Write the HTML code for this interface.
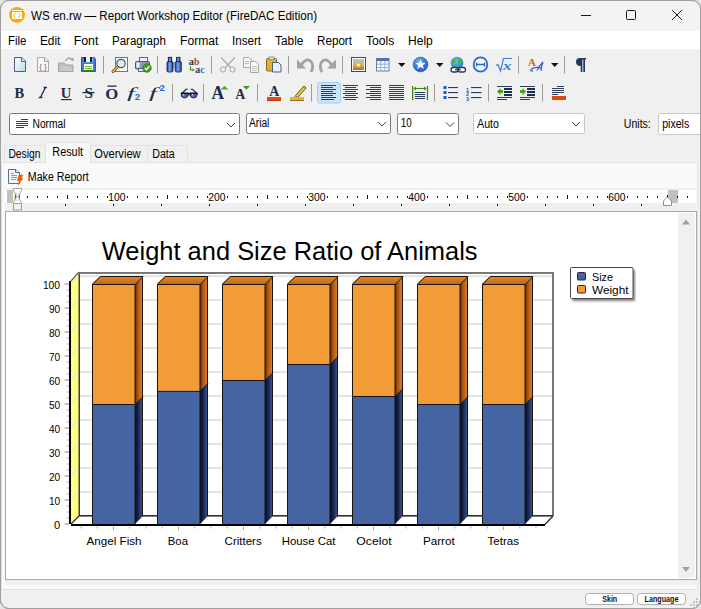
<!DOCTYPE html>
<html><head><meta charset="utf-8"><style>
html,body{margin:0;padding:0;width:701px;height:609px;overflow:hidden;background:#fff}

</style></head><body>
<svg width="701" height="609" viewBox="0 0 701 609" style="display:block">
<defs>
<linearGradient id="sideO" x1="0" x2="1" y1="0" y2="0"><stop offset="0" stop-color="#5a2a08"/><stop offset="0.35" stop-color="#b0520f"/><stop offset="1" stop-color="#e08a30"/></linearGradient>
<linearGradient id="topO" x1="0" x2="0" y1="0" y2="1"><stop offset="0" stop-color="#e08a2a"/><stop offset="1" stop-color="#c06a18"/></linearGradient>
<linearGradient id="sideB" x1="0" x2="1" y1="0" y2="0"><stop offset="0" stop-color="#060a20"/><stop offset="0.4" stop-color="#18244e"/><stop offset="1" stop-color="#3e5f9e"/></linearGradient>
<linearGradient id="pageG" x1="0" x2="1" y1="0" y2="1"><stop offset="0" stop-color="#ffffff"/><stop offset="1" stop-color="#b8dced"/></linearGradient>

</defs>
<rect x="0" y="0" width="701" height="609" fill="#e6e6e6"/>
<rect x="0.5" y="0.5" width="700" height="608" rx="8" ry="8" fill="#f0f0f0" stroke="#a0a0a0" stroke-width="1"/>
<path d="M1 9 A8 8 0 0 1 9 1 L692 1 A8 8 0 0 1 700 9 L700 31 L1 31 Z" fill="#f3f3f3"/>
<circle cx="17" cy="14.9" r="7.9" fill="#f9ab00"/>
<rect x="12" y="10" width="10" height="1" fill="#fff"/><rect x="12" y="12" width="10" height="7" fill="#fff"/>
<path d="M15.6 13.4 L13.5 15.5 L15.6 17.6 M18.4 13.4 L20.5 15.5 L18.4 17.6" stroke="#f9ab00" stroke-width="1" fill="none"/>
<text x="31.00" y="20.00" font-size="12" fill="#000" font-weight="normal" font-family="Liberation Sans" textLength="286.00" lengthAdjust="spacingAndGlyphs" >WS en.rw — Report Workshop Editor (FireDAC Edition)</text>
<path d="M581 15.5 H591" stroke="#1a1a1a" stroke-width="1"/>
<rect x="626.5" y="10.5" width="9" height="9" rx="1" fill="none" stroke="#1a1a1a" stroke-width="1"/>
<path d="M672 10 L682 20 M682 10 L672 20" stroke="#1a1a1a" stroke-width="1"/>
<rect x="1" y="31" width="699" height="18" fill="#ffffff"/>
<text x="8.00" y="45.00" font-size="12" fill="#000" font-weight="normal" font-family="Liberation Sans" textLength="18.40" lengthAdjust="spacingAndGlyphs" >File</text>
<text x="39.90" y="45.00" font-size="12" fill="#000" font-weight="normal" font-family="Liberation Sans" textLength="20.50" lengthAdjust="spacingAndGlyphs" >Edit</text>
<text x="73.70" y="45.00" font-size="12" fill="#000" font-weight="normal" font-family="Liberation Sans" textLength="24.70" lengthAdjust="spacingAndGlyphs" >Font</text>
<text x="112.00" y="45.00" font-size="12" fill="#000" font-weight="normal" font-family="Liberation Sans" textLength="53.80" lengthAdjust="spacingAndGlyphs" >Paragraph</text>
<text x="180.00" y="45.00" font-size="12" fill="#000" font-weight="normal" font-family="Liberation Sans" textLength="38.40" lengthAdjust="spacingAndGlyphs" >Format</text>
<text x="232.00" y="45.00" font-size="12" fill="#000" font-weight="normal" font-family="Liberation Sans" textLength="29.00" lengthAdjust="spacingAndGlyphs" >Insert</text>
<text x="275.00" y="45.00" font-size="12" fill="#000" font-weight="normal" font-family="Liberation Sans" textLength="28.40" lengthAdjust="spacingAndGlyphs" >Table</text>
<text x="317.00" y="45.00" font-size="12" fill="#000" font-weight="normal" font-family="Liberation Sans" textLength="35.00" lengthAdjust="spacingAndGlyphs" >Report</text>
<text x="366.00" y="45.00" font-size="12" fill="#000" font-weight="normal" font-family="Liberation Sans" textLength="28.40" lengthAdjust="spacingAndGlyphs" >Tools</text>
<text x="408.00" y="45.00" font-size="12" fill="#000" font-weight="normal" font-family="Liberation Sans" textLength="24.80" lengthAdjust="spacingAndGlyphs" >Help</text>
<path d="M14.5 57.5 H22 L25.5 61 V71.5 H14.5 Z" fill="url(#pageG)" stroke="#4c5f7e"/>
<path d="M21.5 57.5 V61.5 H25.5" fill="#d8ecf6" stroke="#4c5f7e"/>
<path d="M37.5 57.5 H45 L48.5 61 V71.5 H37.5 Z" fill="#f6f6f6" stroke="#a8a8a8"/>
<path d="M44.5 57.5 V61.5 H48.5" fill="#e8e8e8" stroke="#a8a8a8"/>
<text x="43" y="69" font-size="8" fill="#707070" font-family="Liberation Sans" font-weight="normal" font-style="normal" text-anchor="middle">{ }</text>
<path d="M58.5 63 V71.5 H73 V65 H66 L64.5 63 Z" fill="#bdbdbd" stroke="#a6a6a6"/>
<rect x="60" y="66" width="12" height="5" fill="#c8c8c8"/>
<path d="M65.5 61 Q68.5 56 72 59.5" fill="none" stroke="#9a9a9a" stroke-width="1.3"/>
<path d="M70 60 L73.8 61 L73.2 57.5 Z" fill="#9a9a9a"/>
<path d="M81 57 H94 L96 59 V72 H81 Z" fill="#3f7fd8"/>
<path d="M81.5 57.5 H93.8 L95.5 59.2 V71.5 H81.5 Z" fill="none" stroke="#2a5cb0" stroke-width="1"/>
<rect x="84" y="57" width="8.5" height="5" fill="#f4f4f4"/><rect x="84" y="57" width="2" height="5" fill="#10182a"/><rect x="90" y="57" width="2" height="5" fill="#10182a"/>
<rect x="84" y="62" width="9" height="1" fill="#5a9ae8"/>
<rect x="84" y="64" width="9" height="6" fill="#f4faff"/>
<rect x="85" y="66" width="7" height="1" fill="#78b828"/><rect x="85" y="68" width="7" height="1" fill="#78b828"/>
<rect x="84" y="70" width="9" height="2" fill="#3a7a10"/>
<rect x="103.0" y="56" width="1" height="17.5" fill="#9a9a9a"/>
<rect x="115.5" y="57.5" width="12" height="14" fill="#fafafa" stroke="#6a7890"/>
<circle cx="121" cy="63.5" r="4.2" fill="#dceaf4" stroke="#4a5a70" stroke-width="1.2"/>
<path d="M117.5 67 L113 71.5" stroke="#6a4a10" stroke-width="3" stroke-linecap="round"/>
<path d="M117.5 67 L113 71.5" stroke="#f0c040" stroke-width="1.6" stroke-linecap="round"/>
<rect x="139.5" y="57.5" width="8" height="4.5" fill="#e8f2fa" stroke="#5a6a80"/>
<rect x="135.5" y="61.5" width="14" height="7.5" rx="1" fill="#8a9ab0" stroke="#4a5a70"/>
<rect x="136.5" y="62.5" width="3" height="5" fill="#f0f4f8"/>
<rect x="138.5" y="68.5" width="8" height="3" fill="#dde8f0" stroke="#5a6a80"/>
<circle cx="147" cy="68" r="4.3" fill="#4a9a20" stroke="#2a6a10" stroke-width="0.6"/>
<path d="M144.8 68 L146.5 69.8 L149.3 66.2" fill="none" stroke="#fff" stroke-width="1.3"/>
<rect x="157.0" y="56" width="1" height="17.5" fill="#9a9a9a"/>
<defs><linearGradient id="binoG" x1="0" x2="1" y1="0" y2="0"><stop offset="0" stop-color="#1a3a90"/><stop offset="0.45" stop-color="#7aa8f0"/><stop offset="1" stop-color="#1a3a90"/></linearGradient></defs>
<rect x="167.0" y="61.5" width="6" height="10.5" rx="1.2" fill="url(#binoG)" stroke="#0c1a40" stroke-width="0.8"/>
<rect x="168.3" y="57.3" width="3.4" height="4.5" fill="url(#binoG)" stroke="#0c1a40" stroke-width="0.8"/>
<rect x="175.3" y="61.5" width="6" height="10.5" rx="1.2" fill="url(#binoG)" stroke="#0c1a40" stroke-width="0.8"/>
<rect x="176.60000000000002" y="57.3" width="3.4" height="4.5" fill="url(#binoG)" stroke="#0c1a40" stroke-width="0.8"/>
<rect x="173" y="62.5" width="2.3" height="1" fill="#3a70d8"/><rect x="173" y="64.5" width="2.3" height="1" fill="#3a70d8"/><rect x="173" y="66.5" width="2.3" height="1" fill="#3a70d8"/>
<text x="188.5" y="65" font-size="10" fill="#2e3f60" font-family="Liberation Serif" font-weight="bold" font-style="normal" text-anchor="start" textLength="5.5" lengthAdjust="spacingAndGlyphs">a</text>
<text x="194" y="65" font-size="10" fill="#b84a18" font-family="Liberation Serif" font-weight="bold" font-style="normal" text-anchor="start" textLength="5.5" lengthAdjust="spacingAndGlyphs">b</text>
<path d="M190.5 66.5 V70 H193.5" fill="none" stroke="#3a8a20" stroke-width="1.2"/><path d="M192.5 68.5 L194.5 70 L192.5 71.5 Z" fill="#3a8a20"/>
<text x="195" y="72.5" font-size="10" fill="#2e3f60" font-family="Liberation Serif" font-weight="bold" font-style="normal" text-anchor="start" textLength="5.2" lengthAdjust="spacingAndGlyphs">a</text>
<text x="200.2" y="72.5" font-size="10" fill="#3a70d0" font-family="Liberation Serif" font-weight="bold" font-style="normal" text-anchor="start" textLength="4.5" lengthAdjust="spacingAndGlyphs">c</text>
<rect x="211.0" y="56" width="1" height="17.5" fill="#9a9a9a"/>
<path d="M221 57.5 L231 68 M235 57.5 L225 68" stroke="#a8a8a8" stroke-width="1.1"/>
<circle cx="223" cy="69.5" r="2.5" fill="none" stroke="#b0b0b0" stroke-width="1.1"/><circle cx="232.5" cy="69.5" r="2.5" fill="none" stroke="#b0b0b0" stroke-width="1.1"/>
<path d="M243.5 57.5 H249 L251.5 60 V67.5 H243.5 Z" fill="#f8f8f8" stroke="#a8a8a8"/>
<path d="M250.5 61.5 H256 L258.5 64 V72.5 H250.5 Z" fill="#f8f8f8" stroke="#a8a8a8"/>
<g fill="#b0b0b0"><rect x="245" y="61" width="4" height="0.8"/><rect x="245" y="63" width="4" height="0.8"/><rect x="252" y="66" width="5" height="0.8"/><rect x="252" y="68" width="5" height="0.8"/><rect x="252" y="70" width="5" height="0.8"/></g>
<rect x="266.5" y="58.5" width="10" height="12.5" rx="1" fill="#e0b030" stroke="#8a6a20"/>
<rect x="269" y="57" width="5" height="2.5" fill="#e8eef8" stroke="#6a7a90" stroke-width="0.8"/>
<path d="M272.5 62.5 H278.5 L281 65 V72 H272.5 Z" fill="#e8f2fa" stroke="#4c5f7e"/>
<rect x="288.0" y="56" width="1" height="17.5" fill="#9a9a9a"/>
<path d="M301 65.5 Q306 57 311 61.5 Q314.5 66 311 72" fill="none" stroke="#a2a2a2" stroke-width="2.8"/>
<path d="M297 59.5 L297 68.5 L306 68.5 Z" fill="#a2a2a2"/>
<path d="M332 65.5 Q327 57 322 61.5 Q318.5 66 322 72" fill="none" stroke="#a2a2a2" stroke-width="2.8"/>
<path d="M336 59.5 L336 68.5 L327 68.5 Z" fill="#a2a2a2"/>
<rect x="342.0" y="56" width="1" height="17.5" fill="#9a9a9a"/>
<rect x="351.5" y="57.5" width="14" height="14" fill="#fff" stroke="#3a4a68"/>
<defs><linearGradient id="sky" x1="0" x2="0" y1="0" y2="1"><stop offset="0" stop-color="#9cc8f0"/><stop offset="0.55" stop-color="#f0b030"/><stop offset="0.75" stop-color="#e88a20"/><stop offset="1" stop-color="#5080c0"/></linearGradient></defs>
<rect x="353" y="59" width="11" height="11" fill="url(#sky)"/>
<circle cx="358.5" cy="65" r="1.6" fill="#fff8d0"/>
<rect x="376.5" y="58.5" width="12.5" height="12.5" fill="#f4f8fc" stroke="#6a80a0"/>
<rect x="376.5" y="58.5" width="12.5" height="2.5" fill="#4a72b8"/>
<g stroke="#8aa0c0" stroke-width="0.8"><path d="M380.8 61 V71 M384.8 61 V71 M377 64.2 H389 M377 67.5 H389"/></g>
<path d="M398 63 H405.5 L401.75 67 Z" fill="#111"/>
<defs><radialGradient id="bluec" cx="0.4" cy="0.3" r="0.8"><stop offset="0" stop-color="#6ab0f8"/><stop offset="1" stop-color="#1a50c0"/></radialGradient><radialGradient id="globeG" cx="0.4" cy="0.35" r="0.7"><stop offset="0" stop-color="#60c8f8"/><stop offset="1" stop-color="#1878c0"/></radialGradient></defs>
<circle cx="420.5" cy="64.5" r="7.3" fill="url(#bluec)" stroke="#1a3a90" stroke-width="0.6"/>
<path d="M420.5 59.2 L421.9 62.8 L425.6 62.9 L422.7 65.2 L423.7 68.9 L420.5 66.8 L417.3 68.9 L418.3 65.2 L415.4 62.9 L419.1 62.8 Z" fill="#fff"/>
<path d="M436 63 H443.5 L439.75 67 Z" fill="#111"/>
<circle cx="457" cy="63" r="6.3" fill="url(#globeG)"/>
<path d="M452 60 Q455 58 456 61 Q454 64 453 63 Z M458 58.5 Q462 59 462.5 62 Q460 65 458 62 Z M455 65 Q458 64 459 68 Q456 69 455 67 Z" fill="#5ab030"/>
<rect x="451" y="67.5" width="7" height="4.5" rx="2.2" fill="#fff" stroke="#2a3a58" stroke-width="1.3"/>
<rect x="458" y="67.5" width="7.5" height="4.5" rx="2.2" fill="#fff" stroke="#2a3a58" stroke-width="1.3"/>
<rect x="455" y="69.2" width="6" height="1.2" fill="#2a3a58"/>
<ellipse cx="480.5" cy="64.5" rx="6.8" ry="7.2" fill="#f4f8ff" stroke="#2a6ad0" stroke-width="1.8"/>
<path d="M476.5 64.5 H484.5 M476.5 62.5 V66.5 M484.5 62.5 V66.5" stroke="#2a6ad0" stroke-width="1.4"/>
<path d="M496 65.5 L498 64.5 L500.5 71 L503.5 58.5 H512" fill="none" stroke="#3a80d0" stroke-width="1.2"/>
<text x="503" y="70" font-size="11.5" fill="#3a80d0" font-family="Liberation Serif" font-weight="bold" font-style="italic" text-anchor="start" textLength="8.5" lengthAdjust="spacingAndGlyphs">x</text>
<rect x="518.0" y="56" width="1" height="17.5" fill="#9a9a9a"/>
<text x="528" y="65.5" font-size="11" fill="#d85a20" font-family="Liberation Serif" font-weight="bold" font-style="normal" text-anchor="start" textLength="8" lengthAdjust="spacingAndGlyphs">A</text>
<path d="M533 71 Q530 71.5 531 69.5 Q535 66 541 68 M537 70.5 Q539 66 543 62 Q541 67 541 71" fill="none" stroke="#3a5ad0" stroke-width="1.2"/>
<path d="M551 63 H558.5 L554.75 67 Z" fill="#111"/>
<rect x="564.0" y="56" width="1" height="17.5" fill="#9a9a9a"/>
<path d="M580 58 H586 V59.5 H585 V72 H583.3 V59.5 H582.4 V72 H580.7 V66 Q576 66 576 62 Q576 58 580 58 Z" fill="#22385a"/>
<text x="14.5" y="98" font-size="15.5" fill="#1c2c4c" font-family="Liberation Serif" font-weight="bold" font-style="normal" text-anchor="start" textLength="9.7" lengthAdjust="spacingAndGlyphs">B</text>
<path d="M43.5 87.5 H47 M38.8 97.5 H42.3 M45.3 87.5 L40.5 97.5" fill="none" stroke="#1c2c4c" stroke-width="1.3"/>
<text x="60.8" y="97.5" font-size="15" fill="#1c2c4c" font-family="Liberation Serif" font-weight="bold" font-style="normal" text-anchor="start" textLength="10.5" lengthAdjust="spacingAndGlyphs">U</text>
<rect x="61" y="99" width="10.5" height="1.2" fill="#1c2c4c"/>
<text x="84.5" y="98" font-size="15" fill="#1c2c4c" font-family="Liberation Serif" font-weight="bold" font-style="normal" text-anchor="start" textLength="8.5" lengthAdjust="spacingAndGlyphs">S</text>
<rect x="82.5" y="92" width="12" height="1.2" fill="#1c2c4c"/>
<text x="105.3" y="98.6" font-size="15" fill="#1c2c4c" font-family="Liberation Serif" font-weight="bold" font-style="normal" text-anchor="start" textLength="13" lengthAdjust="spacingAndGlyphs">O</text>
<rect x="107.5" y="85.5" width="9" height="1.3" fill="#1c2c4c"/>
<text x="127" y="98" font-size="15" fill="#1c2c4c" font-family="Liberation Serif" font-weight="normal" font-style="italic" text-anchor="start" textLength="8" lengthAdjust="spacingAndGlyphs">f</text>
<text x="134.8" y="100" font-size="9" fill="#1a6ad8" font-family="Liberation Sans" font-weight="bold" font-style="normal" text-anchor="start" textLength="5.4" lengthAdjust="spacingAndGlyphs">2</text>
<text x="149" y="98" font-size="15" fill="#1c2c4c" font-family="Liberation Serif" font-weight="normal" font-style="italic" text-anchor="start" textLength="8" lengthAdjust="spacingAndGlyphs">f</text>
<text x="159.6" y="91.3" font-size="9" fill="#1a6ad8" font-family="Liberation Sans" font-weight="bold" font-style="normal" text-anchor="start" textLength="5.4" lengthAdjust="spacingAndGlyphs">2</text>
<rect x="172.0" y="84" width="1" height="17.5" fill="#9a9a9a"/>
<path d="M181.8 93.5 L186 89.3 H187.8 M196.8 93.5 L192.5 89.3 H190.7" fill="none" stroke="#1a2438" stroke-width="1.1"/>
<path d="M181 93 H188.3 V94 Q188.3 98 184.6 98 Q181 98 181 94 Z" fill="#4a68a8" stroke="#101a30" stroke-width="0.8"/>
<path d="M190 93 H197.3 V94 Q197.3 98 193.6 98 Q190 98 190 94 Z" fill="#4a68a8" stroke="#101a30" stroke-width="0.8"/>
<rect x="181" y="92.8" width="16.5" height="1.3" fill="#0a0f1c"/>
<rect x="188" y="94.3" width="2.2" height="1" fill="#0a0f1c"/>
<circle cx="183.5" cy="94.8" r="0.8" fill="#dde8ff"/><circle cx="192.5" cy="94.8" r="0.8" fill="#dde8ff"/>
<rect x="203.0" y="84" width="1" height="17.5" fill="#9a9a9a"/>
<text x="211.6" y="98.6" font-size="18.5" fill="#1c2c4c" font-family="Liberation Serif" font-weight="bold" font-style="normal" text-anchor="start" textLength="12.6" lengthAdjust="spacingAndGlyphs">A</text>
<path d="M220.5 89.5 L224.5 85.8 L228.5 89.5 Z" fill="#58a828"/>
<text x="235.3" y="98.6" font-size="15.5" fill="#1c2c4c" font-family="Liberation Serif" font-weight="bold" font-style="normal" text-anchor="start" textLength="10" lengthAdjust="spacingAndGlyphs">A</text>
<path d="M242.8 86 H250 L246.4 89.8 Z" fill="#4a9a20"/>
<rect x="257.0" y="84" width="1" height="17.5" fill="#9a9a9a"/>
<text x="269.3" y="95.5" font-size="15" fill="#1c2c4c" font-family="Liberation Serif" font-weight="bold" font-style="normal" text-anchor="start" textLength="10" lengthAdjust="spacingAndGlyphs">A</text>
<rect x="267" y="97" width="14" height="4" fill="#e84a0c"/><rect x="267" y="100" width="14" height="1" fill="#b83a08"/>
<path d="M295.5 95.5 L304 86 L306 88 L297.5 97.5 Z" fill="#f8d020" stroke="#403818" stroke-width="0.9"/>
<path d="M295.5 95.5 L293 97.5 L297.5 97.5 Z" fill="#c89020"/>
<rect x="290" y="97" width="14" height="4" fill="#e0b040"/><rect x="290" y="100" width="14" height="1" fill="#9a7020"/>
<rect x="311.0" y="84" width="1" height="17.5" fill="#9a9a9a"/>
<rect x="317.5" y="82.5" width="23" height="20.5" rx="2" fill="#cce4f7" stroke="#99d1ff"/>
<rect x="321" y="85" width="15" height="1" fill="#2a3e5c"/>
<rect x="321" y="87" width="12" height="1" fill="#2a3e5c"/>
<rect x="321" y="89" width="15" height="1" fill="#2a3e5c"/>
<rect x="321" y="91" width="12" height="1" fill="#2a3e5c"/>
<rect x="321" y="93" width="15" height="1" fill="#2a3e5c"/>
<rect x="321" y="95" width="12" height="1" fill="#2a3e5c"/>
<rect x="321" y="97" width="15" height="1" fill="#2a3e5c"/>
<rect x="321" y="99" width="13" height="1" fill="#2a3e5c"/>
<rect x="343" y="85" width="15" height="1" fill="#2a3e5c"/>
<rect x="345" y="87" width="11" height="1" fill="#2a3e5c"/>
<rect x="343" y="89" width="15" height="1" fill="#2a3e5c"/>
<rect x="345" y="91" width="11" height="1" fill="#2a3e5c"/>
<rect x="343" y="93" width="15" height="1" fill="#2a3e5c"/>
<rect x="345" y="95" width="11" height="1" fill="#2a3e5c"/>
<rect x="343" y="97" width="15" height="1" fill="#2a3e5c"/>
<rect x="345" y="99" width="11" height="1" fill="#2a3e5c"/>
<rect x="366" y="85" width="15" height="1" fill="#2a3e5c"/>
<rect x="370" y="87" width="11" height="1" fill="#2a3e5c"/>
<rect x="366" y="89" width="15" height="1" fill="#2a3e5c"/>
<rect x="370" y="91" width="11" height="1" fill="#2a3e5c"/>
<rect x="366" y="93" width="15" height="1" fill="#2a3e5c"/>
<rect x="370" y="95" width="11" height="1" fill="#2a3e5c"/>
<rect x="366" y="97" width="15" height="1" fill="#2a3e5c"/>
<rect x="370" y="99" width="11" height="1" fill="#2a3e5c"/>
<rect x="389" y="85" width="15" height="1" fill="#2a3e5c"/>
<rect x="389" y="87" width="15" height="1" fill="#2a3e5c"/>
<rect x="389" y="89" width="15" height="1" fill="#2a3e5c"/>
<rect x="389" y="91" width="15" height="1" fill="#2a3e5c"/>
<rect x="389" y="93" width="15" height="1" fill="#2a3e5c"/>
<rect x="389" y="95" width="15" height="1" fill="#2a3e5c"/>
<rect x="389" y="97" width="15" height="1" fill="#2a3e5c"/>
<rect x="389" y="99" width="15" height="1" fill="#2a3e5c"/>
<rect x="412" y="86" width="1.3" height="14" fill="#3a8a10"/><rect x="426.8" y="86" width="1.3" height="14" fill="#3a8a10"/>
<path d="M414 88.5 H426" stroke="#3a8a10" stroke-width="1.1"/><path d="M413.5 88.5 L416 86.5 V90.5 Z M426.5 88.5 L424 86.5 V90.5 Z" fill="#3a8a10"/>
<rect x="415" y="92" width="10" height="1" fill="#2a3e5c"/>
<rect x="415" y="94" width="10" height="1" fill="#2a3e5c"/>
<rect x="415" y="96" width="10" height="1" fill="#2a3e5c"/>
<rect x="415" y="98" width="10" height="1" fill="#2a3e5c"/>
<rect x="434.0" y="84" width="1" height="17.5" fill="#9a9a9a"/>
<rect x="443.5" y="86" width="3" height="3" fill="#1a5ad0"/>
<rect x="448" y="87" width="10" height="1.1" fill="#2a3e5c"/>
<rect x="443.5" y="91" width="3" height="3" fill="#1a5ad0"/>
<rect x="448" y="92" width="10" height="1.1" fill="#2a3e5c"/>
<rect x="443.5" y="96" width="3" height="3" fill="#1a5ad0"/>
<rect x="448" y="97" width="10" height="1.1" fill="#2a3e5c"/>
<text x="466" y="91.5" font-size="5.5" fill="#1a5ad0" font-family="Liberation Sans" font-weight="bold" font-style="normal" text-anchor="start" textLength="3" lengthAdjust="spacingAndGlyphs">1</text>
<rect x="471" y="87" width="10.5" height="1.1" fill="#2a3e5c"/>
<text x="466" y="96.1" font-size="5.5" fill="#1a5ad0" font-family="Liberation Sans" font-weight="bold" font-style="normal" text-anchor="start" textLength="3" lengthAdjust="spacingAndGlyphs">2</text>
<rect x="471" y="92" width="10.5" height="1.1" fill="#2a3e5c"/>
<text x="466" y="100.7" font-size="5.5" fill="#1a5ad0" font-family="Liberation Sans" font-weight="bold" font-style="normal" text-anchor="start" textLength="3" lengthAdjust="spacingAndGlyphs">3</text>
<rect x="471" y="97" width="10.5" height="1.1" fill="#2a3e5c"/>
<rect x="488.0" y="84" width="1" height="17.5" fill="#9a9a9a"/>
<rect x="497" y="86" width="15" height="1" fill="#2a3e5c"/>
<rect x="504" y="88" width="8" height="2" fill="#1e2e4c"/>
<rect x="504" y="91" width="8" height="2" fill="#1e2e4c"/>
<rect x="504" y="94" width="8" height="2" fill="#1e2e4c"/>
<rect x="497" y="97" width="15" height="1" fill="#2a3e5c"/>
<rect x="497" y="99" width="10" height="1" fill="#2a3e5c"/>
<path d="M497 91.5 L500.5 88 V90 H503 V93 H500.5 V95 Z" fill="#4aa020"/>
<rect x="520" y="86" width="15" height="1" fill="#2a3e5c"/>
<rect x="527" y="88" width="8" height="2" fill="#1e2e4c"/>
<rect x="527" y="91" width="8" height="2" fill="#1e2e4c"/>
<rect x="527" y="94" width="8" height="2" fill="#1e2e4c"/>
<rect x="520" y="97" width="15" height="1" fill="#2a3e5c"/>
<rect x="520" y="99" width="10" height="1" fill="#2a3e5c"/>
<path d="M526 91.5 L522.5 88 V90 H520 V93 H522.5 V95 Z" fill="#4aa020"/>
<rect x="542.0" y="84" width="1" height="17.5" fill="#9a9a9a"/>
<rect x="557" y="86" width="7" height="1" fill="#2a3e5c"/><rect x="552" y="88" width="12" height="1" fill="#2a3e5c"/><rect x="552" y="90" width="12" height="1" fill="#2a3e5c"/><rect x="552" y="92" width="12" height="1" fill="#2a3e5c"/><rect x="552" y="94" width="6" height="1" fill="#2a3e5c"/>
<rect x="552" y="96" width="14" height="4" fill="#e04810"/>
<rect x="9.5" y="113.5" width="230" height="21" rx="2" fill="#fff" stroke="#7a7a7a" stroke-width="1"/>
<g fill="#2c4060"><rect x="21" y="119" width="7" height="1"/><rect x="16" y="121" width="12" height="1"/><rect x="16" y="123" width="12" height="1"/><rect x="16" y="125" width="12" height="1"/><rect x="16" y="127" width="8" height="1"/></g>
<text x="32.50" y="128.00" font-size="12" fill="#000" font-weight="normal" font-family="Liberation Sans" textLength="33.00" lengthAdjust="spacingAndGlyphs" >Normal</text>
<path d="M227 123 L231.0 127 L235 123" fill="none" stroke="#444" stroke-width="1"/>
<rect x="246.5" y="113.5" width="144" height="20" rx="2" fill="#fff" stroke="#7a7a7a" stroke-width="1"/>
<text x="249.00" y="127.00" font-size="12" fill="#000" font-weight="normal" font-family="Liberation Sans" textLength="20.30" lengthAdjust="spacingAndGlyphs" >Arial</text>
<path d="M378 122 L382.0 126 L386 122" fill="none" stroke="#444" stroke-width="1"/>
<rect x="397.5" y="113.5" width="61" height="21" rx="2" fill="#fff" stroke="#7a7a7a" stroke-width="1"/>
<text x="400.70" y="127.00" font-size="12" fill="#000" font-weight="normal" font-family="Liberation Sans" textLength="11.00" lengthAdjust="spacingAndGlyphs" >10</text>
<path d="M446 122.5 L450.0 126.5 L454 122.5" fill="none" stroke="#444" stroke-width="1"/>
<rect x="473.5" y="113.5" width="111" height="20" rx="2" fill="#fff" stroke="#c8c8c8" stroke-width="1"/>
<text x="477.00" y="128.00" font-size="12" fill="#000" font-weight="normal" font-family="Liberation Sans" textLength="22.00" lengthAdjust="spacingAndGlyphs" >Auto</text>
<path d="M572 122 L576.0 126 L580 122" fill="none" stroke="#444" stroke-width="1"/>
<text x="623.80" y="128.00" font-size="12" fill="#000" font-weight="normal" font-family="Liberation Sans" textLength="27.00" lengthAdjust="spacingAndGlyphs" >Units:</text>
<rect x="658.5" y="113.5" width="53" height="21" rx="2" fill="#fff" stroke="#c8c8c8" stroke-width="1"/>
<text x="662.20" y="128.00" font-size="12" fill="#000" font-weight="normal" font-family="Liberation Sans" textLength="27.00" lengthAdjust="spacingAndGlyphs" >pixels</text>
<rect x="1.5" y="162.5" width="696" height="427" fill="#f9f9f9" stroke="#e2e2e2"/>
<rect x="4.5" y="145.5" width="42" height="17" fill="#f0f0f0" stroke="#e2e2e2"/>
<rect x="90.5" y="145.5" width="57" height="17" fill="#f0f0f0" stroke="#e2e2e2"/>
<rect x="147.5" y="145.5" width="40" height="17" fill="#f0f0f0" stroke="#e2e2e2"/>
<rect x="45.5" y="142.5" width="45" height="21" fill="#f9f9f9" stroke="#e2e2e2"/>
<rect x="46" y="162" width="44" height="2" fill="#f9f9f9"/>
<text x="8.40" y="158.00" font-size="12" fill="#000" font-weight="normal" font-family="Liberation Sans" textLength="32.00" lengthAdjust="spacingAndGlyphs" >Design</text>
<text x="52.30" y="155.70" font-size="12" fill="#000" font-weight="normal" font-family="Liberation Sans" textLength="30.80" lengthAdjust="spacingAndGlyphs" >Result</text>
<text x="94.30" y="158.00" font-size="12" fill="#000" font-weight="normal" font-family="Liberation Sans" textLength="46.30" lengthAdjust="spacingAndGlyphs" >Overview</text>
<text x="152.20" y="158.00" font-size="12" fill="#000" font-weight="normal" font-family="Liberation Sans" textLength="22.60" lengthAdjust="spacingAndGlyphs" >Data</text>
<path d="M8.5 169.5 H16 L19.5 173 V183.5 H8.5 Z" fill="#f2f7fb" stroke="#5a6e8a"/>
<path d="M15.5 169.5 V172.5 H19.5" fill="#dde8f4" stroke="#5a6e8a"/>
<g fill="#8a9cb8"><rect x="11" y="173" width="3" height="1"/><rect x="11" y="175" width="6" height="1"/><rect x="11" y="177" width="6" height="1"/><rect x="11" y="179" width="5" height="1"/></g>
<path d="M19 175 L23 175 L21 178.3 L23 178.3 L18 185 L19.3 180.5 L17.2 180.5 Z" fill="#f0600c" stroke="#c84800" stroke-width="0.4"/>
<text x="27.80" y="180.70" font-size="12" fill="#000" font-weight="normal" font-family="Liberation Sans" textLength="61.00" lengthAdjust="spacingAndGlyphs" >Make Report</text>
<rect x="5" y="188" width="691" height="397" fill="#f0f0f0"/>
<rect x="5" y="190" width="691" height="13" fill="#ffffff"/>
<rect x="7" y="190" width="6" height="13" fill="#c0c0c0"/>
<rect x="668" y="190" width="10" height="13" fill="#c0c0c0"/>
<rect x="27" y="196" width="1" height="2" fill="#111"/><rect x="37" y="196" width="1" height="2" fill="#111"/><rect x="47" y="196" width="1" height="2" fill="#111"/><rect x="57" y="196" width="1" height="2" fill="#111"/><rect x="67" y="195" width="1" height="4" fill="#111"/><rect x="77" y="196" width="1" height="2" fill="#111"/><rect x="87" y="196" width="1" height="2" fill="#111"/><rect x="97" y="196" width="1" height="2" fill="#111"/><rect x="107" y="196" width="1" height="2" fill="#111"/><rect x="127" y="196" width="1" height="2" fill="#111"/><rect x="137" y="196" width="1" height="2" fill="#111"/><rect x="147" y="196" width="1" height="2" fill="#111"/><rect x="157" y="196" width="1" height="2" fill="#111"/><rect x="167" y="195" width="1" height="4" fill="#111"/><rect x="177" y="196" width="1" height="2" fill="#111"/><rect x="187" y="196" width="1" height="2" fill="#111"/><rect x="197" y="196" width="1" height="2" fill="#111"/><rect x="207" y="196" width="1" height="2" fill="#111"/><rect x="227" y="196" width="1" height="2" fill="#111"/><rect x="237" y="196" width="1" height="2" fill="#111"/><rect x="247" y="196" width="1" height="2" fill="#111"/><rect x="257" y="196" width="1" height="2" fill="#111"/><rect x="267" y="195" width="1" height="4" fill="#111"/><rect x="277" y="196" width="1" height="2" fill="#111"/><rect x="287" y="196" width="1" height="2" fill="#111"/><rect x="297" y="196" width="1" height="2" fill="#111"/><rect x="307" y="196" width="1" height="2" fill="#111"/><rect x="327" y="196" width="1" height="2" fill="#111"/><rect x="337" y="196" width="1" height="2" fill="#111"/><rect x="347" y="196" width="1" height="2" fill="#111"/><rect x="357" y="196" width="1" height="2" fill="#111"/><rect x="367" y="195" width="1" height="4" fill="#111"/><rect x="377" y="196" width="1" height="2" fill="#111"/><rect x="387" y="196" width="1" height="2" fill="#111"/><rect x="397" y="196" width="1" height="2" fill="#111"/><rect x="407" y="196" width="1" height="2" fill="#111"/><rect x="427" y="196" width="1" height="2" fill="#111"/><rect x="437" y="196" width="1" height="2" fill="#111"/><rect x="447" y="196" width="1" height="2" fill="#111"/><rect x="457" y="196" width="1" height="2" fill="#111"/><rect x="467" y="195" width="1" height="4" fill="#111"/><rect x="477" y="196" width="1" height="2" fill="#111"/><rect x="487" y="196" width="1" height="2" fill="#111"/><rect x="497" y="196" width="1" height="2" fill="#111"/><rect x="507" y="196" width="1" height="2" fill="#111"/><rect x="527" y="196" width="1" height="2" fill="#111"/><rect x="537" y="196" width="1" height="2" fill="#111"/><rect x="547" y="196" width="1" height="2" fill="#111"/><rect x="557" y="196" width="1" height="2" fill="#111"/><rect x="567" y="195" width="1" height="4" fill="#111"/><rect x="577" y="196" width="1" height="2" fill="#111"/><rect x="587" y="196" width="1" height="2" fill="#111"/><rect x="597" y="196" width="1" height="2" fill="#111"/><rect x="607" y="196" width="1" height="2" fill="#111"/><rect x="627" y="196" width="1" height="2" fill="#111"/><rect x="637" y="196" width="1" height="2" fill="#111"/><rect x="647" y="196" width="1" height="2" fill="#111"/><rect x="657" y="196" width="1" height="2" fill="#111"/><rect x="667" y="195" width="1" height="4" fill="#111"/><rect x="677" y="196" width="1" height="2" fill="#111"/><rect x="687" y="196" width="1" height="2" fill="#111"/><rect x="65" y="204" width="1" height="2" fill="#111"/><rect x="113" y="204" width="1" height="2" fill="#111"/><rect x="161" y="204" width="1" height="2" fill="#111"/><rect x="209" y="204" width="1" height="2" fill="#111"/><rect x="257" y="204" width="1" height="2" fill="#111"/><rect x="305" y="204" width="1" height="2" fill="#111"/><rect x="353" y="204" width="1" height="2" fill="#111"/><rect x="401" y="204" width="1" height="2" fill="#111"/><rect x="449" y="204" width="1" height="2" fill="#111"/><rect x="497" y="204" width="1" height="2" fill="#111"/><rect x="545" y="204" width="1" height="2" fill="#111"/><rect x="593" y="204" width="1" height="2" fill="#111"/><rect x="641" y="204" width="1" height="2" fill="#111"/>
<text x="108.20" y="201.00" font-size="11.5" fill="#000" font-weight="normal" font-family="Liberation Sans" textLength="17.20" lengthAdjust="spacingAndGlyphs" >100</text>
<text x="208.20" y="201.00" font-size="11.5" fill="#000" font-weight="normal" font-family="Liberation Sans" textLength="17.20" lengthAdjust="spacingAndGlyphs" >200</text>
<text x="308.20" y="201.00" font-size="11.5" fill="#000" font-weight="normal" font-family="Liberation Sans" textLength="17.20" lengthAdjust="spacingAndGlyphs" >300</text>
<text x="408.20" y="201.00" font-size="11.5" fill="#000" font-weight="normal" font-family="Liberation Sans" textLength="17.20" lengthAdjust="spacingAndGlyphs" >400</text>
<text x="508.20" y="201.00" font-size="11.5" fill="#000" font-weight="normal" font-family="Liberation Sans" textLength="17.20" lengthAdjust="spacingAndGlyphs" >500</text>
<text x="608.20" y="201.00" font-size="11.5" fill="#000" font-weight="normal" font-family="Liberation Sans" textLength="17.20" lengthAdjust="spacingAndGlyphs" >600</text>
<text x="14.40" y="201.00" font-size="11.5" fill="#000" font-weight="normal" font-family="Liberation Sans" textLength="5.50" lengthAdjust="spacingAndGlyphs" >0</text>
<path d="M13.5 188.5 H21.5 V190.5 L18.2 196.5 L21.5 202.5 V203.5 H13.5 V202.5 L16.8 196.5 L13.5 190.5 Z" fill="#fff" fill-opacity="0.85" stroke="#a0a0a0"/>
<rect x="13.5" y="203.5" width="8" height="6.5" fill="#f0f0f0" stroke="#a0a0a0"/>
<path d="M663.5 205.5 V201 L667.5 197 L671.5 201 V205.5 Z" fill="#fff" stroke="#909090"/>
<rect x="5.5" y="211.5" width="691" height="368" fill="#ffffff" stroke="#a8a8b0"/>
<rect x="678" y="213" width="17" height="365" fill="#f0f0f0"/>
<path d="M682 224.5 L686 219.5 L690 224.5 Z" fill="#a0a0a0"/>
<path d="M682 567 L686 572 L690 567 Z" fill="#a0a0a0"/>
<g>
<rect x="79" y="273" width="474" height="243" fill="#fff"/>
<rect x="79" y="491.5" width="474" height="1.2" fill="#d4d4d4"/>
<rect x="79" y="467.5" width="474" height="1.2" fill="#d4d4d4"/>
<rect x="79" y="443.5" width="474" height="1.2" fill="#d4d4d4"/>
<rect x="79" y="419.5" width="474" height="1.2" fill="#d4d4d4"/>
<rect x="79" y="395.5" width="474" height="1.2" fill="#d4d4d4"/>
<rect x="79" y="371.5" width="474" height="1.2" fill="#d4d4d4"/>
<rect x="79" y="347.5" width="474" height="1.2" fill="#d4d4d4"/>
<rect x="79" y="323.5" width="474" height="1.2" fill="#d4d4d4"/>
<rect x="79" y="299.5" width="474" height="1.2" fill="#d4d4d4"/>
<rect x="79" y="275.5" width="474" height="1.2" fill="#d4d4d4"/>
<path d="M71 281.0 L79 273 L79 516 L71 524 Z" fill="#ffff80"/>
<path d="M71 500.0 L79 492.0" stroke="#e4e4c0" stroke-width="1"/>
<path d="M71 476.0 L79 468.0" stroke="#e4e4c0" stroke-width="1"/>
<path d="M71 452.0 L79 444.0" stroke="#e4e4c0" stroke-width="1"/>
<path d="M71 428.0 L79 420.0" stroke="#e4e4c0" stroke-width="1"/>
<path d="M71 404.0 L79 396.0" stroke="#e4e4c0" stroke-width="1"/>
<path d="M71 380.0 L79 372.0" stroke="#e4e4c0" stroke-width="1"/>
<path d="M71 356.0 L79 348.0" stroke="#e4e4c0" stroke-width="1"/>
<path d="M71 332.0 L79 324.0" stroke="#e4e4c0" stroke-width="1"/>
<path d="M71 308.0 L79 300.0" stroke="#e4e4c0" stroke-width="1"/>
<path d="M71 284.0 L79 276.0" stroke="#e4e4c0" stroke-width="1"/>
<path d="M71 524 L79 516 L553 516 L545 524 Z" fill="#fff"/>
<rect x="78.5" y="273" width="1.5" height="243" fill="#404040"/>
<rect x="79" y="272" width="475" height="2" fill="#787878"/>
<rect x="552" y="272" width="2" height="244" fill="#787878"/>
<path d="M71 281.0 L79 272" stroke="#606060" stroke-width="1.2"/>
<rect x="79" y="515" width="474" height="1.6" fill="#303030"/>
<path d="M71 524 L79 516" stroke="#303030" stroke-width="1.2"/>
<path d="M545 524.5 L553 516" stroke="#303030" stroke-width="1.4"/>
<rect x="64.5" y="523.4" width="4.5" height="1.2" fill="#a0a0a0"/>
<rect x="66.5" y="517.5" width="2.5" height="1" fill="#b8b8b8"/>
<rect x="66.5" y="511.5" width="2.5" height="1" fill="#b8b8b8"/>
<rect x="66.5" y="505.5" width="2.5" height="1" fill="#b8b8b8"/>
<rect x="64.5" y="499.4" width="4.5" height="1.2" fill="#a0a0a0"/>
<rect x="66.5" y="493.5" width="2.5" height="1" fill="#b8b8b8"/>
<rect x="66.5" y="487.5" width="2.5" height="1" fill="#b8b8b8"/>
<rect x="66.5" y="481.5" width="2.5" height="1" fill="#b8b8b8"/>
<rect x="64.5" y="475.4" width="4.5" height="1.2" fill="#a0a0a0"/>
<rect x="66.5" y="469.5" width="2.5" height="1" fill="#b8b8b8"/>
<rect x="66.5" y="463.5" width="2.5" height="1" fill="#b8b8b8"/>
<rect x="66.5" y="457.5" width="2.5" height="1" fill="#b8b8b8"/>
<rect x="64.5" y="451.4" width="4.5" height="1.2" fill="#a0a0a0"/>
<rect x="66.5" y="445.5" width="2.5" height="1" fill="#b8b8b8"/>
<rect x="66.5" y="439.5" width="2.5" height="1" fill="#b8b8b8"/>
<rect x="66.5" y="433.5" width="2.5" height="1" fill="#b8b8b8"/>
<rect x="64.5" y="427.4" width="4.5" height="1.2" fill="#a0a0a0"/>
<rect x="66.5" y="421.5" width="2.5" height="1" fill="#b8b8b8"/>
<rect x="66.5" y="415.5" width="2.5" height="1" fill="#b8b8b8"/>
<rect x="66.5" y="409.5" width="2.5" height="1" fill="#b8b8b8"/>
<rect x="64.5" y="403.4" width="4.5" height="1.2" fill="#a0a0a0"/>
<rect x="66.5" y="397.5" width="2.5" height="1" fill="#b8b8b8"/>
<rect x="66.5" y="391.5" width="2.5" height="1" fill="#b8b8b8"/>
<rect x="66.5" y="385.5" width="2.5" height="1" fill="#b8b8b8"/>
<rect x="64.5" y="379.4" width="4.5" height="1.2" fill="#a0a0a0"/>
<rect x="66.5" y="373.5" width="2.5" height="1" fill="#b8b8b8"/>
<rect x="66.5" y="367.5" width="2.5" height="1" fill="#b8b8b8"/>
<rect x="66.5" y="361.5" width="2.5" height="1" fill="#b8b8b8"/>
<rect x="64.5" y="355.4" width="4.5" height="1.2" fill="#a0a0a0"/>
<rect x="66.5" y="349.5" width="2.5" height="1" fill="#b8b8b8"/>
<rect x="66.5" y="343.5" width="2.5" height="1" fill="#b8b8b8"/>
<rect x="66.5" y="337.5" width="2.5" height="1" fill="#b8b8b8"/>
<rect x="64.5" y="331.4" width="4.5" height="1.2" fill="#a0a0a0"/>
<rect x="66.5" y="325.5" width="2.5" height="1" fill="#b8b8b8"/>
<rect x="66.5" y="319.5" width="2.5" height="1" fill="#b8b8b8"/>
<rect x="66.5" y="313.5" width="2.5" height="1" fill="#b8b8b8"/>
<rect x="64.5" y="307.4" width="4.5" height="1.2" fill="#a0a0a0"/>
<rect x="66.5" y="301.5" width="2.5" height="1" fill="#b8b8b8"/>
<rect x="66.5" y="295.5" width="2.5" height="1" fill="#b8b8b8"/>
<rect x="66.5" y="289.5" width="2.5" height="1" fill="#b8b8b8"/>
<rect x="64.5" y="283.4" width="4.5" height="1.2" fill="#a0a0a0"/>
<rect x="69" y="281.0" width="2" height="243.0" fill="#000"/>
<rect x="71" y="524" width="474" height="2" fill="#000"/>
<rect x="80.50" y="526.5" width="1" height="2" fill="#a8a8a8"/>
<rect x="96.75" y="526.5" width="1" height="2" fill="#a8a8a8"/>
<rect x="113.00" y="526.5" width="1" height="3.5" fill="#a8a8a8"/>
<rect x="129.25" y="526.5" width="1" height="2" fill="#a8a8a8"/>
<rect x="145.50" y="526.5" width="1" height="2" fill="#a8a8a8"/>
<rect x="161.75" y="526.5" width="1" height="2" fill="#a8a8a8"/>
<rect x="178.00" y="526.5" width="1" height="3.5" fill="#a8a8a8"/>
<rect x="194.25" y="526.5" width="1" height="2" fill="#a8a8a8"/>
<rect x="210.50" y="526.5" width="1" height="2" fill="#a8a8a8"/>
<rect x="226.75" y="526.5" width="1" height="2" fill="#a8a8a8"/>
<rect x="243.00" y="526.5" width="1" height="3.5" fill="#a8a8a8"/>
<rect x="259.25" y="526.5" width="1" height="2" fill="#a8a8a8"/>
<rect x="275.50" y="526.5" width="1" height="2" fill="#a8a8a8"/>
<rect x="291.75" y="526.5" width="1" height="2" fill="#a8a8a8"/>
<rect x="308.00" y="526.5" width="1" height="3.5" fill="#a8a8a8"/>
<rect x="324.25" y="526.5" width="1" height="2" fill="#a8a8a8"/>
<rect x="340.50" y="526.5" width="1" height="2" fill="#a8a8a8"/>
<rect x="356.75" y="526.5" width="1" height="2" fill="#a8a8a8"/>
<rect x="373.00" y="526.5" width="1" height="3.5" fill="#a8a8a8"/>
<rect x="389.25" y="526.5" width="1" height="2" fill="#a8a8a8"/>
<rect x="405.50" y="526.5" width="1" height="2" fill="#a8a8a8"/>
<rect x="421.75" y="526.5" width="1" height="2" fill="#a8a8a8"/>
<rect x="438.00" y="526.5" width="1" height="3.5" fill="#a8a8a8"/>
<rect x="454.25" y="526.5" width="1" height="2" fill="#a8a8a8"/>
<rect x="470.50" y="526.5" width="1" height="2" fill="#a8a8a8"/>
<rect x="486.75" y="526.5" width="1" height="2" fill="#a8a8a8"/>
<rect x="503.00" y="526.5" width="1" height="3.5" fill="#a8a8a8"/>
<rect x="519.25" y="526.5" width="1" height="2" fill="#a8a8a8"/>
<rect x="535.50" y="526.5" width="1" height="2" fill="#a8a8a8"/>
<rect x="92" y="404.0" width="43" height="120.0" fill="#4464a2"/>
<rect x="92" y="284.0" width="43" height="120.0" fill="#f29c38"/>
<path d="M135 404.0 L143 396.0 L143 516 L135 524 Z" fill="url(#sideB)"/>
<path d="M135 284.0 L143 276.0 L143 396.0 L135 404.0 Z" fill="url(#sideO)"/>
<path d="M92 284.0 L100 276.0 L143 276.0 L135 284.0 Z" fill="url(#topO)"/>
<path d="M92.5 524 V284.5 H135 V524 M92 404.5 H135 L143 396.5 M92.5 284.0 L100.5 276.5 H142.5 V516 M135 284.5 L143 276.5" fill="none" stroke="#1c140c" stroke-width="1"/>
<rect x="157" y="390.8" width="43" height="133.2" fill="#4464a2"/>
<rect x="157" y="284.0" width="43" height="106.80000000000001" fill="#f29c38"/>
<path d="M200 390.8 L208 382.8 L208 516 L200 524 Z" fill="url(#sideB)"/>
<path d="M200 284.0 L208 276.0 L208 382.8 L200 390.8 Z" fill="url(#sideO)"/>
<path d="M157 284.0 L165 276.0 L208 276.0 L200 284.0 Z" fill="url(#topO)"/>
<path d="M157.5 524 V284.5 H200 V524 M157 391.3 H200 L208 383.3 M157.5 284.0 L165.5 276.5 H207.5 V516 M200 284.5 L208 276.5" fill="none" stroke="#1c140c" stroke-width="1"/>
<rect x="222" y="380.0" width="43" height="144.0" fill="#4464a2"/>
<rect x="222" y="284.0" width="43" height="96.0" fill="#f29c38"/>
<path d="M265 380.0 L273 372.0 L273 516 L265 524 Z" fill="url(#sideB)"/>
<path d="M265 284.0 L273 276.0 L273 372.0 L265 380.0 Z" fill="url(#sideO)"/>
<path d="M222 284.0 L230 276.0 L273 276.0 L265 284.0 Z" fill="url(#topO)"/>
<path d="M222.5 524 V284.5 H265 V524 M222 380.5 H265 L273 372.5 M222.5 284.0 L230.5 276.5 H272.5 V516 M265 284.5 L273 276.5" fill="none" stroke="#1c140c" stroke-width="1"/>
<rect x="287" y="364.0" width="43" height="160.0" fill="#4464a2"/>
<rect x="287" y="284.0" width="43" height="80.0" fill="#f29c38"/>
<path d="M330 364.0 L338 356.0 L338 516 L330 524 Z" fill="url(#sideB)"/>
<path d="M330 284.0 L338 276.0 L338 356.0 L330 364.0 Z" fill="url(#sideO)"/>
<path d="M287 284.0 L295 276.0 L338 276.0 L330 284.0 Z" fill="url(#topO)"/>
<path d="M287.5 524 V284.5 H330 V524 M287 364.5 H330 L338 356.5 M287.5 284.0 L295.5 276.5 H337.5 V516 M330 284.5 L338 276.5" fill="none" stroke="#1c140c" stroke-width="1"/>
<rect x="352" y="396.0" width="43" height="128.0" fill="#4464a2"/>
<rect x="352" y="284.0" width="43" height="112.0" fill="#f29c38"/>
<path d="M395 396.0 L403 388.0 L403 516 L395 524 Z" fill="url(#sideB)"/>
<path d="M395 284.0 L403 276.0 L403 388.0 L395 396.0 Z" fill="url(#sideO)"/>
<path d="M352 284.0 L360 276.0 L403 276.0 L395 284.0 Z" fill="url(#topO)"/>
<path d="M352.5 524 V284.5 H395 V524 M352 396.5 H395 L403 388.5 M352.5 284.0 L360.5 276.5 H402.5 V516 M395 284.5 L403 276.5" fill="none" stroke="#1c140c" stroke-width="1"/>
<rect x="417" y="404.0" width="43" height="120.0" fill="#4464a2"/>
<rect x="417" y="284.0" width="43" height="120.0" fill="#f29c38"/>
<path d="M460 404.0 L468 396.0 L468 516 L460 524 Z" fill="url(#sideB)"/>
<path d="M460 284.0 L468 276.0 L468 396.0 L460 404.0 Z" fill="url(#sideO)"/>
<path d="M417 284.0 L425 276.0 L468 276.0 L460 284.0 Z" fill="url(#topO)"/>
<path d="M417.5 524 V284.5 H460 V524 M417 404.5 H460 L468 396.5 M417.5 284.0 L425.5 276.5 H467.5 V516 M460 284.5 L468 276.5" fill="none" stroke="#1c140c" stroke-width="1"/>
<rect x="482" y="404.0" width="43" height="120.0" fill="#4464a2"/>
<rect x="482" y="284.0" width="43" height="120.0" fill="#f29c38"/>
<path d="M525 404.0 L533 396.0 L533 516 L525 524 Z" fill="url(#sideB)"/>
<path d="M525 284.0 L533 276.0 L533 396.0 L525 404.0 Z" fill="url(#sideO)"/>
<path d="M482 284.0 L490 276.0 L533 276.0 L525 284.0 Z" fill="url(#topO)"/>
<path d="M482.5 524 V284.5 H525 V524 M482 404.5 H525 L533 396.5 M482.5 284.0 L490.5 276.5 H532.5 V516 M525 284.5 L533 276.5" fill="none" stroke="#1c140c" stroke-width="1"/>
</g>
<text x="101.80" y="260.00" font-size="25" fill="#000" font-family="Liberation Sans" textLength="375.80" lengthAdjust="spacingAndGlyphs">Weight and Size Ratio of Animals</text>
<text x="53.90" y="528.70" font-size="10.5" fill="#000" font-family="Liberation Sans" textLength="6.20" lengthAdjust="spacingAndGlyphs">0</text>
<text x="48.90" y="504.70" font-size="10.5" fill="#000" font-family="Liberation Sans" textLength="11.20" lengthAdjust="spacingAndGlyphs">10</text>
<text x="48.90" y="480.70" font-size="10.5" fill="#000" font-family="Liberation Sans" textLength="11.20" lengthAdjust="spacingAndGlyphs">20</text>
<text x="48.90" y="456.70" font-size="10.5" fill="#000" font-family="Liberation Sans" textLength="11.20" lengthAdjust="spacingAndGlyphs">30</text>
<text x="48.90" y="432.70" font-size="10.5" fill="#000" font-family="Liberation Sans" textLength="11.20" lengthAdjust="spacingAndGlyphs">40</text>
<text x="48.90" y="408.70" font-size="10.5" fill="#000" font-family="Liberation Sans" textLength="11.20" lengthAdjust="spacingAndGlyphs">50</text>
<text x="48.90" y="384.70" font-size="10.5" fill="#000" font-family="Liberation Sans" textLength="11.20" lengthAdjust="spacingAndGlyphs">60</text>
<text x="48.90" y="360.70" font-size="10.5" fill="#000" font-family="Liberation Sans" textLength="11.20" lengthAdjust="spacingAndGlyphs">70</text>
<text x="48.90" y="336.70" font-size="10.5" fill="#000" font-family="Liberation Sans" textLength="11.20" lengthAdjust="spacingAndGlyphs">80</text>
<text x="48.90" y="312.70" font-size="10.5" fill="#000" font-family="Liberation Sans" textLength="11.20" lengthAdjust="spacingAndGlyphs">90</text>
<text x="42.90" y="288.70" font-size="10.5" fill="#000" font-family="Liberation Sans" textLength="17.20" lengthAdjust="spacingAndGlyphs">100</text>
<text x="86.50" y="545.00" font-size="11" fill="#000" font-family="Liberation Sans" textLength="55.10" lengthAdjust="spacingAndGlyphs">Angel Fish</text>
<text x="167.80" y="545.00" font-size="11" fill="#000" font-family="Liberation Sans" textLength="20.20" lengthAdjust="spacingAndGlyphs">Boa</text>
<text x="224.60" y="545.00" font-size="11" fill="#000" font-family="Liberation Sans" textLength="37.10" lengthAdjust="spacingAndGlyphs">Critters</text>
<text x="281.70" y="545.00" font-size="11" fill="#000" font-family="Liberation Sans" textLength="53.80" lengthAdjust="spacingAndGlyphs">House Cat</text>
<text x="356.30" y="545.00" font-size="11" fill="#000" font-family="Liberation Sans" textLength="35.30" lengthAdjust="spacingAndGlyphs">Ocelot</text>
<text x="422.90" y="545.00" font-size="11" fill="#000" font-family="Liberation Sans" textLength="31.90" lengthAdjust="spacingAndGlyphs">Parrot</text>
<text x="487.60" y="545.00" font-size="11" fill="#000" font-family="Liberation Sans" textLength="31.50" lengthAdjust="spacingAndGlyphs">Tetras</text>
<defs><filter id="lsh" x="-20%" y="-20%" width="140%" height="140%"><feGaussianBlur stdDeviation="1"/></filter></defs>
<rect x="572.5" y="270" width="62.5" height="31" fill="#808080" filter="url(#lsh)"/>
<rect x="570.5" y="267.5" width="62.5" height="31" rx="1" fill="#fff" stroke="#484848"/>
<rect x="577.5" y="272.5" width="8" height="7.5" rx="1" fill="#4464a2" stroke="#282828"/>
<rect x="577.5" y="285.5" width="8" height="7.5" rx="1" fill="#f29c38" stroke="#282828"/>
<text x="592.00" y="280.50" font-size="10.5" fill="#000" font-family="Liberation Sans" textLength="21.00" lengthAdjust="spacingAndGlyphs">Size</text>
<text x="592.00" y="293.50" font-size="10.5" fill="#000" font-family="Liberation Sans" textLength="36.50" lengthAdjust="spacingAndGlyphs">Weight</text>
<rect x="585.5" y="593.5" width="48" height="11" rx="3" fill="#fff" stroke="#b0b0b0"/>
<rect x="637.5" y="593.5" width="48" height="11" rx="3" fill="#fff" stroke="#b0b0b0"/>
<text x="602.20" y="602.00" font-size="8.5" fill="#111" font-weight="bold" font-family="Liberation Sans" textLength="15.00" lengthAdjust="spacingAndGlyphs" >Skin</text>
<text x="644.50" y="602.00" font-size="8.5" fill="#111" font-weight="bold" font-family="Liberation Sans" textLength="34.00" lengthAdjust="spacingAndGlyphs" >Language</text>
<g fill="#c4c4c4"><rect x="696" y="598" width="2" height="2"/><rect x="693" y="601" width="2" height="2"/><rect x="696" y="601" width="2" height="2"/><rect x="690" y="604" width="2" height="2"/><rect x="693" y="604" width="2" height="2"/><rect x="696" y="604" width="2" height="2"/></g>
<path d="M0.5 9 A8.5 8.5 0 0 1 9 0.5 H692 A8.5 8.5 0 0 1 700.5 9 V600 A8.5 8.5 0 0 1 692 608.5 H9 A8.5 8.5 0 0 1 0.5 600 Z" fill="none" stroke="#a0a0a0"/>
</svg>
</body></html>
